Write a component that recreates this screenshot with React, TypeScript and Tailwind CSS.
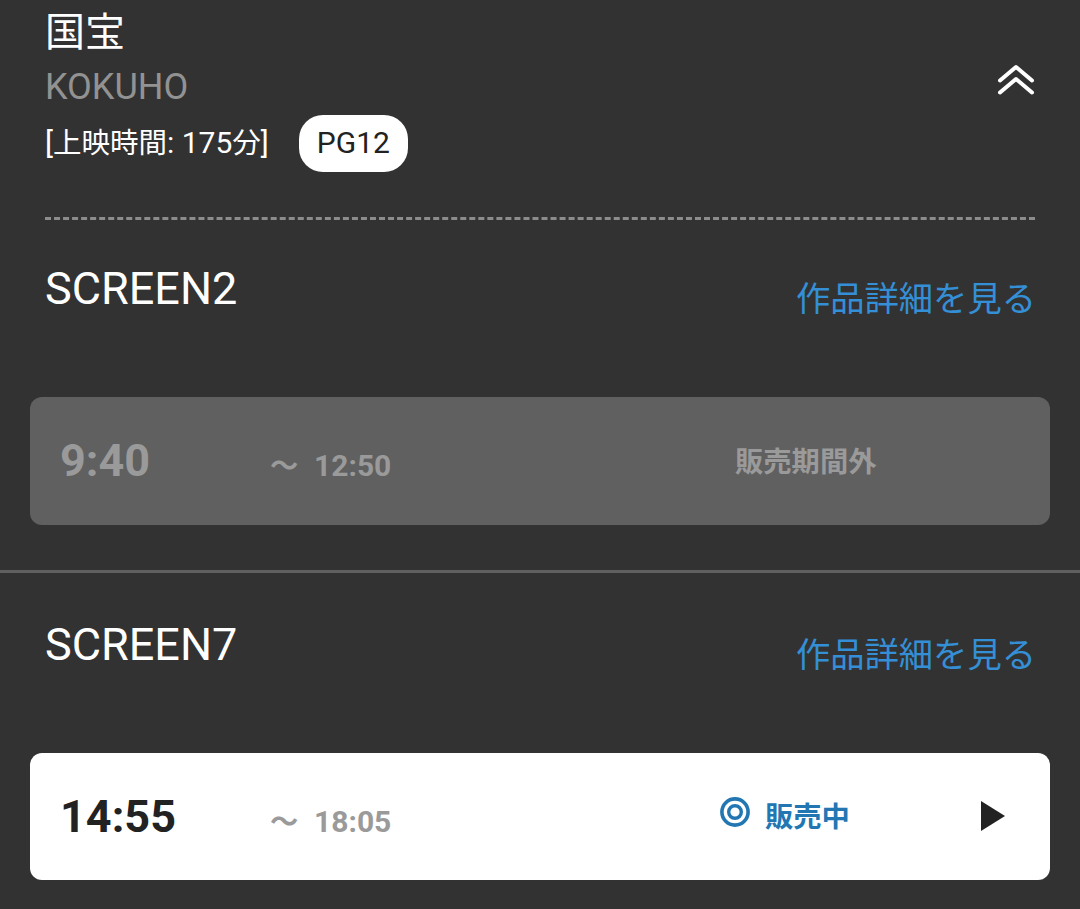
type Show = {
  start: string;
  end: string;
  status: string;
  onSale: boolean;
};

type Screen = {
  name: string;
  show: Show;
};

const screens: Screen[] = [
  { name: 'SCREEN2', show: { start: '9:40', end: '12:50', status: '販売期間外', onSale: false } },
  { name: 'SCREEN7', show: { start: '14:55', end: '18:05', status: '販売中', onSale: true } },
];

function CollapseIcon() {
  return (
    <svg className="h-8 w-10" viewBox="0 0 40 32" fill="none" stroke="currentColor"
      strokeWidth="4" strokeLinecap="round" strokeLinejoin="round">
      <path d="M4 17.5 20 4l16 13.5" />
      <path d="M4 29.5 20 16l16 13.5" />
    </svg>
  );
}

function AvailableIcon() {
  return (
    <svg className="h-[30px] w-[30px]" viewBox="0 0 30 30" fill="none" stroke="currentColor">
      <circle cx="15" cy="15" r="13.1" strokeWidth="3.6" />
      <circle cx="15" cy="15" r="6.3" strokeWidth="3.4" />
    </svg>
  );
}

function ShowCard({ show }: { show: Show }) {
  const card = show.onSale ? 'h-[127px] bg-white text-[#222222]' : 'h-32 bg-[#606060] text-[#9a9a9a]';

  return (
    <div className={`mx-[30px] flex items-center rounded-xl font-bold ${card}`}>
      <div className="w-[240px] pb-px pl-[30px] text-[45px] leading-[53px]">{show.start}</div>
      <div className="flex w-[450px] items-center pt-2.5 text-[30px] leading-9 text-[#9a9a9a]">
        <span className="w-[44px] pt-0.5 text-[28.3px]">〜</span>
        <span>{show.end}</span>
      </div>
      {show.onSale ? (
        <div className="flex flex-1 items-center text-[28.3px] leading-9 text-[#2277b3]">
          <span className="mr-[15px] mb-2.5"><AvailableIcon /></span>
          <span className="pt-[3px]">{show.status}</span>
          <svg className="mr-[45px] mb-0.5 ml-auto h-[30px] w-6" viewBox="0 0 24 30" fill="#222222">
            <path d="M0 0 24 15 0 30Z" />
          </svg>
        </div>
      ) : (
        <div className="pt-1 pl-[15px] text-[28.3px] leading-9">{show.status}</div>
      )}
    </div>
  );
}

function ScreenSection({ screen }: { screen: Screen }) {
  return (
    <section className="h-[356px] border-b-3 border-[#606060]">
      <div className="flex h-[180px] items-start justify-between px-[45px]">
        <h2 className="pt-[45px] text-[45px] leading-[53px]">{screen.name}</h2>
        <a className="-mr-px pt-[60px] text-[34.3px] leading-[45px] text-[#348fd6]">作品詳細を見る</a>
      </div>
      <ShowCard show={screen.show} />
    </section>
  );
}

export default function App() {
  return (
    <div className="h-[909px] w-[1080px] overflow-hidden bg-[#323232] font-[Roboto,'Noto_Sans_CJK_JP',sans-serif] text-white">
      <header className="mx-[45px] flex h-[220px] justify-between border-b-3 border-dashed border-[#8c8c8c]">
        <div>
          <h1 className="pt-[3px] text-[40px] leading-[60px]">国宝</h1>
          <p className="pt-0.5 text-4xl leading-[45px] text-[#929292]">KOKUHO</p>
          <div className="flex items-start pt-[5px] text-[30px]">
            <p className="leading-[56px]">
              [<span className="text-[28.5px]">上映時間</span>: 175<span className="text-[28.5px]">分</span>]
            </p>
            <span className="ml-[30px] h-[57px] rounded-3xl bg-white px-[18px] leading-[56px] text-[#222222]">PG12</span>
          </div>
        </div>
        <div className="-mr-px pt-[63px]">
          <CollapseIcon />
        </div>
      </header>
      <div className="-mt-[3px]">
        {screens.map((screen) => (
          <ScreenSection key={screen.name} screen={screen} />
        ))}
      </div>
    </div>
  );
}
